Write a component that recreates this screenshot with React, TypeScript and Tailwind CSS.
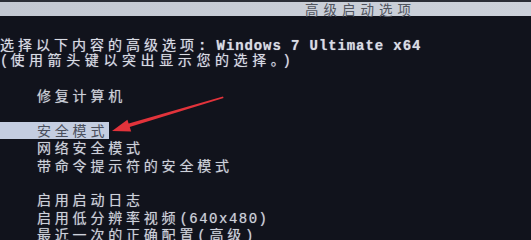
const cjk = "font-['Noto_Sans_CJK_SC','Noto_Sans',sans-serif]";
const mono = "font-['Liberation_Mono','DejaVu_Sans_Mono',monospace]";

function Line({ children, className = "" }: { children?: React.ReactNode; className?: string }) {
  return <div className={`h-[17.4px] leading-[17.4px] whitespace-nowrap ${className}`}>{children}</div>;
}

export default function App() {
  return (
    <div className={`relative w-[531px] h-[240px] overflow-hidden bg-[#11131c] text-[#d9dce4] ${cjk}`}>
      {/* title bar */}
      <div className="h-[16px] bg-gradient-to-r from-[#c3c8d2] to-[#ccd1da] border-t-2 border-[#2a2d36]">
        <div className="pl-[305px] text-[13.5px] leading-[14px] tracking-[5px] text-[#50545e]">高级启动选项</div>
      </div>

      {/* header text */}
      <div className="mt-[21px] text-[14px] tracking-[4px] [text-shadow:0_0_1px_rgba(220,225,240,0.6)]">
        <div className="h-[15px] leading-[15px] whitespace-nowrap">
          选择以下内容的高级选项<span className={`${mono} font-bold tracking-[0.9px]`}>: Windows 7 Ultimate x64</span>
        </div>
        <div className="h-[15px] leading-[15px] whitespace-nowrap tracking-[4.6px]">
          <span className={`${mono} tracking-[2px]`}>(</span>使用箭头键以突出显示您的选择。<span className={`${mono}`}>)</span>
        </div>
      </div>

      {/* menu */}
      <div className="mt-[20px] text-[14px] tracking-[3.8px] text-[#cdd1da] [text-shadow:0_0_1px_rgba(210,215,230,0.55)]">
        <Line className="pl-[37px]">修复计算机</Line>
        <Line />
        <Line>
          <span className="inline-block h-[17px] leading-[17px] pl-[37px] pr-[1px] bg-[#c4cde0] text-[#4a4f5c] [text-shadow:none]">安全模式</span>
        </Line>
        <Line className="pl-[37px]">网络安全模式</Line>
        <Line className="pl-[37px]">带命令提示符的安全模式</Line>
        <Line />
        <Line className="pl-[37px]">启用启动日志</Line>
        <Line className="pl-[37px]">
          启用低分辨率视频<span className={`${mono} tracking-[1.5px]`}>(640x480)</span>
        </Line>
        <Line className="pl-[37px]">
          最近一次的正确配置<span className={`${mono}`}>(</span>高级<span className={`${mono}`}>)</span>
        </Line>
      </div>

      {/* red annotation arrow */}
      <svg className="absolute left-0 top-0" width="531" height="240" viewBox="0 0 531 240">
        <polygon points="223,96.5 223.6,98 128,127.5 127,124" fill="#e2333b" />
        <polygon points="112,131 127.4,119.8 131.2,131.6" fill="#e2333b" />
      </svg>
    </div>
  );
}
